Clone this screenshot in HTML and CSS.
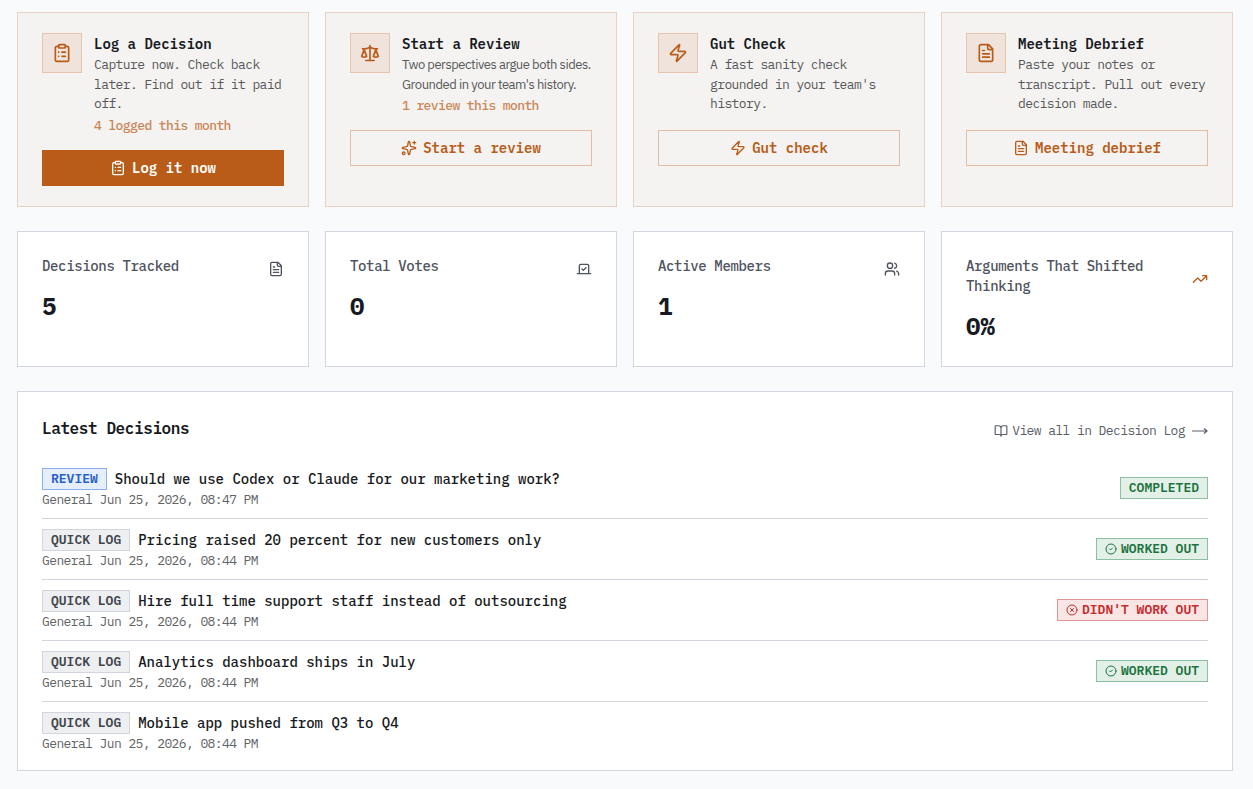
FILE: index.html
```html
<!doctype html>
<html lang="en">
  <head>
    <meta charset="utf-8">
    <meta name="viewport" content="width=device-width">
    <title>Dashboard</title>

    <link rel="stylesheet" href="styles.css">
  </head>
  <body>
    <svg class="sprite">
      <symbol id="clipboard" viewBox="0 0 24 24">
        <rect x="8" y="2" width="8" height="4" rx="1"/>
        <path d="M16 4h2a2 2 0 0 1 2 2v14a2 2 0 0 1-2 2H6a2 2 0 0 1-2-2V6a2 2 0 0 1 2-2h2M12 11h4M12 16h4M8 11h.01M8 16h.01"/>
      </symbol>
      <symbol id="scale" viewBox="0 0 24 24">
        <path d="m16 16 3-8 3 8c-.87.65-1.92 1-3 1s-2.13-.35-3-1ZM2 16l3-8 3 8c-.87.65-1.92 1-3 1s-2.13-.35-3-1ZM7 21h10M12 3v18M3 7h2c2 0 5-1 7-2 2 1 5 2 7 2h2"/>
      </symbol>
      <symbol id="zap" viewBox="0 0 24 24">
        <path d="M4 14a1 1 0 0 1-.78-1.63l9.9-10.2a.5.5 0 0 1 .86.46l-1.92 6.02A1 1 0 0 0 13 10h7a1 1 0 0 1 .78 1.63l-9.9 10.2a.5.5 0 0 1-.86-.46l1.92-6.02A1 1 0 0 0 11 14z"/>
      </symbol>
      <symbol id="file" viewBox="0 0 24 24">
        <path d="M15 2H6a2 2 0 0 0-2 2v16a2 2 0 0 0 2 2h12a2 2 0 0 0 2-2V7ZM14 2v4a2 2 0 0 0 2 2h4M10 9H8M16 13H8M16 17H8"/>
      </symbol>
      <symbol id="sparkles" viewBox="0 0 24 24">
        <path d="M11.017 2.814a1 1 0 0 1 1.966 0l1.051 5.558a2 2 0 0 0 1.594 1.594l5.558 1.051a1 1 0 0 1 0 1.966l-5.558 1.051a2 2 0 0 0-1.594 1.594l-1.051 5.558a1 1 0 0 1-1.966 0l-1.051-5.558a2 2 0 0 0-1.594-1.594l-5.558-1.051a1 1 0 0 1 0-1.966l5.558-1.051a2 2 0 0 0 1.594-1.594zM20 2v4M22 4h-4"/>
        <circle cx="4" cy="20" r="2"/>
      </symbol>
      <symbol id="vote" viewBox="0 0 24 24">
        <path d="m9 12 2 2 4-4M5 7c0-1.1.9-2 2-2h10a2 2 0 0 1 2 2v12H5ZM22 19H2"/>
      </symbol>
      <symbol id="users" viewBox="0 0 24 24">
        <path d="M16 21v-2a4 4 0 0 0-4-4H6a4 4 0 0 0-4 4v2M16 3.128a4 4 0 0 1 0 7.744M22 21v-2a4 4 0 0 0-3-3.87"/>
        <circle cx="9" cy="7" r="4"/>
      </symbol>
      <symbol id="trending" viewBox="0 0 24 24">
        <path d="M16 7h6v6M22 7l-8.500 8.500-5-5L2 17"/>
      </symbol>
      <symbol id="book" viewBox="0 0 24 24">
        <path d="M12 7v14M3 18a1 1 0 0 1-1-1V4a1 1 0 0 1 1-1h5a4 4 0 0 1 4 4 4 4 0 0 1 4-4h5a1 1 0 0 1 1 1v13a1 1 0 0 1-1 1h-6a3 3 0 0 0-3 3 3 3 0 0 0-3-3z"/>
      </symbol>
      <symbol id="check" viewBox="0 0 24 24">
        <circle cx="12" cy="12" r="10"/>
        <path d="m9 12 2 2 4-4"/>
      </symbol>
      <symbol id="cross" viewBox="0 0 24 24">
        <circle cx="12" cy="12" r="10"/>
        <path d="m15 9-6 6M9 9l6 6"/>
      </symbol>
    </svg>

    <section class="grid actions">
      <div class="action">
        <div class="intro">
          <div class="tile"><svg class="icon"><use href="#clipboard"/></svg></div>
          <div>
            <h3>Log a Decision</h3>
            <p class="text">Capture now. Check back later. Find out if it paid off.</p>
            <p class="count">4 logged this month</p>
          </div>
        </div>
        <button class="btn primary"><svg class="icon"><use href="#clipboard"/></svg>Log it now</button>
      </div>

      <div class="action">
        <div class="intro">
          <div class="tile"><svg class="icon"><use href="#scale"/></svg></div>
          <div>
            <h3>Start a Review</h3>
            <p class="text sans">Two perspectives argue both sides.<br>Grounded in your team's history.</p>
            <p class="count">1 review this month</p>
          </div>
        </div>
        <button class="btn"><svg class="icon"><use href="#sparkles"/></svg>Start a review</button>
      </div>

      <div class="action">
        <div class="intro">
          <div class="tile"><svg class="icon"><use href="#zap"/></svg></div>
          <div>
            <h3>Gut Check</h3>
            <p class="text">A fast sanity check grounded in your team's history.</p>
          </div>
        </div>
        <button class="btn"><svg class="icon"><use href="#zap"/></svg>Gut check</button>
      </div>

      <div class="action">
        <div class="intro">
          <div class="tile"><svg class="icon"><use href="#file"/></svg></div>
          <div>
            <h3>Meeting Debrief</h3>
            <p class="text">Paste your notes or transcript. Pull out every decision made.</p>
          </div>
        </div>
        <button class="btn"><svg class="icon"><use href="#file"/></svg>Meeting debrief</button>
      </div>
    </section>

    <section class="grid stats">
      <div class="stat">
        <div class="stat-head"><span class="label">Decisions Tracked</span><svg class="icon"><use href="#file"/></svg></div>
        <div class="value">5</div>
      </div>
      <div class="stat">
        <div class="stat-head"><span class="label">Total Votes</span><svg class="icon"><use href="#vote"/></svg></div>
        <div class="value">0</div>
      </div>
      <div class="stat">
        <div class="stat-head"><span class="label">Active Members</span><svg class="icon"><use href="#users"/></svg></div>
        <div class="value">1</div>
      </div>
      <div class="stat">
        <div class="stat-head"><span class="label">Arguments That Shifted Thinking</span><svg class="icon accent"><use href="#trending"/></svg></div>
        <div class="value">0%</div>
      </div>
    </section>

    <section class="panel">
      <div class="panel-head">
        <h2>Latest Decisions</h2>
        <a class="view-all" href="#">
          <svg class="icon"><use href="#book"/></svg>
          <span>View all in Decision Log</span>
          <svg class="arrow" viewBox="0 0 16 10"><path d="M0 5h15M12 2.500 15 5l-3 2.500"/></svg>
        </a>
      </div>

      <div class="row">
        <div>
          <div class="title"><span class="badge blue">REVIEW</span>Should we use Codex or Claude for our marketing work?</div>
          <div class="meta">General Jun 25, 2026, 08:47 PM</div>
        </div>
        <span class="badge green">COMPLETED</span>
      </div>
      <div class="row">
        <div>
          <div class="title"><span class="badge">QUICK LOG</span>Pricing raised 20 percent for new customers only</div>
          <div class="meta">General Jun 25, 2026, 08:44 PM</div>
        </div>
        <span class="badge green"><svg class="icon"><use href="#check"/></svg>WORKED OUT</span>
      </div>
      <div class="row">
        <div>
          <div class="title"><span class="badge">QUICK LOG</span>Hire full time support staff instead of outsourcing</div>
          <div class="meta">General Jun 25, 2026, 08:44 PM</div>
        </div>
        <span class="badge red"><svg class="icon"><use href="#cross"/></svg>DIDN'T WORK OUT</span>
      </div>
      <div class="row">
        <div>
          <div class="title"><span class="badge">QUICK LOG</span>Analytics dashboard ships in July</div>
          <div class="meta">General Jun 25, 2026, 08:44 PM</div>
        </div>
        <span class="badge green"><svg class="icon"><use href="#check"/></svg>WORKED OUT</span>
      </div>
      <div class="row">
        <div>
          <div class="title"><span class="badge">QUICK LOG</span>Mobile app pushed from Q3 to Q4</div>
          <div class="meta">General Jun 25, 2026, 08:44 PM</div>
        </div>
      </div>
    </section>
  </body>
</html>
```
FILE: styles.css
```css
* { box-sizing: border-box; }

body {
  margin: 0;
  padding: 12px 20px 18px 17px;
  background: #f9fafb;
  color: #171a22;
  font-family: "IBM Plex Mono", "Liberation Mono", monospace;
  font-size: 14px;
  line-height: 20px;
}

h2, h3, p { margin: 0; }

.sprite { display: none; }

.icon {
  width: 16px;
  height: 16px;
  flex: none;
  fill: none;
  stroke: currentColor;
  stroke-width: 2;
  stroke-linecap: round;
  stroke-linejoin: round;
}

.grid {
  display: grid;
  grid-template-columns: repeat(4, 1fr);
  gap: 16px;
  margin-bottom: 24px;
}

.text, .count, .meta, .view-all {
  font-size: 13px;
  letter-spacing: -0.6px;
}

/* action cards */

.action {
  display: flex;
  flex-direction: column;
  gap: 16px;
  height: 195px;
  padding: 20px 24px;
  background: #f4f3f1;
  border: 1px solid #e9d1c1;
}

.intro {
  display: flex;
  gap: 12px;
}

.tile {
  display: flex;
  flex: none;
  align-items: center;
  justify-content: center;
  width: 40px;
  height: 40px;
  background: #f0e3db;
  border: 1px solid #e6c5af;
  color: #b95c19;
}

.tile .icon {
  width: 20px;
  height: 20px;
}

h3 {
  font-size: 14px;
  font-weight: 600;
  line-height: 22px;
}

.text {
  color: #575859;
  line-height: 19.5px;
}

.sans {
  padding-bottom: 0.45px;
  font-family: "IBM Plex Sans", Roboto, sans-serif;
  letter-spacing: -0.46px;
  white-space: nowrap;
}

.count {
  margin-top: 4px;
  color: #cb8658;
  font-weight: 500;
  line-height: 16px;
}

.btn {
  display: flex;
  flex: none;
  align-items: center;
  justify-content: center;
  gap: 6px;
  width: 100%;
  height: 36px;
  padding: 0;
  background: none;
  border: 1px solid #e2bda2;
  color: #b95c19;
  font: 600 14px/20px "IBM Plex Mono", "Liberation Mono", monospace;
  cursor: pointer;
}

.primary {
  background: #b95c19;
  border-color: #b95c19;
  color: #fff;
}

/* stats */

.stat {
  height: 136px;
  padding: 24px;
  background: #fff;
  border: 1px solid #d4d6df;
}

.stat-head {
  display: flex;
  align-items: center;
  justify-content: space-between;
  gap: 16px;
  margin-bottom: 8px;
  color: #50545f;
}

.label {
  padding-bottom: 6px;
  font-weight: 500;
  letter-spacing: -0.35px;
}

.accent { color: #b95c19; }

.value {
  font-size: 24px;
  font-weight: 700;
  line-height: 32px;
}

/* latest decisions */

.panel {
  height: 380px;
  padding: 24px 24px 8px;
  background: #fff;
  border: 1px solid #d4d6df;
}

.panel-head {
  display: flex;
  align-items: center;
  justify-content: space-between;
  height: 30px;
  margin-bottom: 12px;
}

h2 {
  padding-bottom: 6px;
  font-size: 16px;
  font-weight: 600;
  line-height: 24px;
  letter-spacing: -0.4px;
}

.view-all {
  display: flex;
  align-items: center;
  gap: 4px;
  color: #5a5e68;
  line-height: 16px;
  text-decoration: none;
}

.view-all .icon {
  width: 14px;
  height: 14px;
}

.arrow {
  width: 16px;
  height: 10px;
  margin-left: 3px;
  fill: none;
  stroke: currentColor;
  stroke-width: 1.2;
}

.row {
  display: flex;
  align-items: center;
  justify-content: space-between;
  height: 61px;
  padding: 10px 0;
  border-bottom: 1px solid #d4d6df;
}

.row:last-child {
  height: 60px;
  border-bottom: 0;
}

.title {
  display: flex;
  align-items: center;
  gap: 8px;
  margin-bottom: 2px;
  font-weight: 500;
}

.meta {
  color: #626366;
  line-height: 16px;
}

.badge {
  display: inline-flex;
  align-items: center;
  gap: 4px;
  height: 22px;
  padding: 0 8px;
  background: #edeff1;
  border: 1px solid #d2d5de;
  color: #41444c;
  font-size: 13px;
  font-weight: 600;
  line-height: 16px;
}

.badge .icon {
  width: 12px;
  height: 12px;
}

.blue {
  background: #e5eefb;
  border-color: #8eb0ea;
  color: #2560c8;
}

.green {
  background: #e3f0e8;
  border-color: #8dc0a2;
  color: #1d7340;
}

.red {
  background: #fae5e5;
  border-color: #dd9595;
  color: #c42b2b;
}
```
